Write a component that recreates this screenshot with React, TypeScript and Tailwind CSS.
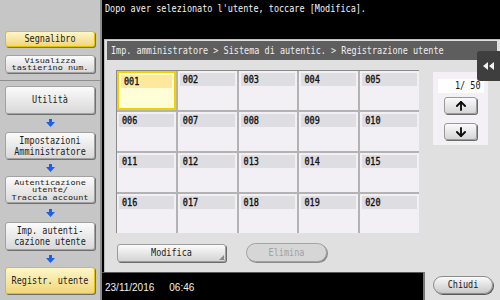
import React from 'react';
import { ArrowUp, ArrowDown } from 'lucide-react';

const mono = "font-['DejaVu_Sans_Mono','Liberation_Mono',monospace] text-[8.5px] leading-[10px]";

interface SideButtonProps {
  label: string;
  height: string;
  yellow?: boolean;
  tiny?: boolean;
}

const SideButton: React.FC<SideButtonProps> = ({ label, height, yellow, tiny }) => {
  const lines = label.split('\n');
  return (
    <div
      className={`${height} w-[90px] rounded-[3px] border flex items-center justify-center text-[#1c1c1c] shadow-[1px_1px_0_#707070] ${
        yellow
          ? 'border-[#e2c000] bg-linear-to-b from-[#fff6c8] to-[#f1d778]'
          : 'border-[#a2a2a2] bg-linear-to-b from-[#fbfbfb] to-[#d9d9d9]'
      }`}
    >
      <div className={`${mono} text-center ${tiny ? 'scale-y-[0.75] leading-[7px]' : 'scale-y-[1.15]'}`}>
        {lines.map((l) => (
          <div key={l}>{l}</div>
        ))}
      </div>
    </div>
  );
};

const BlueArrow = ({ h }: { h: string }) => (
  <div className={`${h} flex items-center justify-center`}>
    <svg width="9" height="8" viewBox="0 0 9 8">
      <path d="M3 0h3v3h3L4.5 8 0 3h3z" fill="#1d5fe6" />
    </svg>
  </div>
);

const Cell = ({ n, selected }: { n: string; selected?: boolean }) => (
  <div
    className={`h-[39px] p-[2px] ${
      selected ? 'bg-[#fffed6] border-2 border-[#f0d200] p-0' : 'bg-[#f2f0f4]'
    }`}
  >
    <div
      className={`h-[13px] pl-[3px] flex items-center ${mono} text-[#111] ${
        selected ? 'bg-[#fde89c]' : 'bg-[#dedde1]'
      }`}
    >
      <span className="scale-y-[1.15] inline-block [-webkit-text-stroke:0.3px_#111]">{n}</span>
    </div>
  </div>
);

const App: React.FC = () => {
  const cells = Array.from({ length: 20 }, (_, i) => String(i + 1).padStart(3, '0'));
  return (
    <div className="relative w-[500px] h-[300px] flex bg-black overflow-hidden">
      {/* sidebar */}
      <div className="w-[102px] h-full bg-[#c6c6c6] border-r-2 border-r-[#8c8c8c] flex flex-col">
        <div className="h-[81px] border-b border-[#8e8e8e] px-[5px] pt-[31px] flex flex-col gap-[8px]">
          <SideButton label="Segnalibro" height="h-[16px]" yellow />
          <SideButton label={'Visualizza\ntastierino num.'} height="h-[18px]" tiny />
        </div>
        <div className="px-[5px] pt-[5px] flex flex-col">
          <SideButton label="Utilità" height="h-[28px]" />
          <BlueArrow h="h-[18px]" />
          <SideButton label={'Impostazioni\nAmministratore'} height="h-[27px]" />
          <BlueArrow h="h-[17px]" />
          <SideButton label={'Autenticazione\nutente/\nTraccia account'} height="h-[27px]" tiny />
          <BlueArrow h="h-[19px]" />
          <SideButton label={'Imp. autenti-\ncazione utente'} height="h-[28px]" />
          <BlueArrow h="h-[17px]" />
          <SideButton label="Registr. utente" height="h-[27px]" yellow />
        </div>
      </div>

      {/* main */}
      <div className="flex-1 flex flex-col">
        <div className={`h-[39px] pl-[3px] pt-[4px] text-[#f4f4f4] ${mono}`}>
          <span className="inline-block scale-y-[1.15]">Dopo aver selezionato l'utente, toccare [Modifica].</span>
        </div>

        <div className="h-[233px] ml-[2px] bg-[#e0e0e0] border-t border-l border-[#bdbdbd] pt-[1px] pl-[2px]">
          <div className={`h-[19px] mr-[3px] bg-[#5e5e5e] text-[#eeeeee] pl-[4px] flex items-center ${mono}`}>
            <span className="inline-block scale-y-[1.15]">
              Imp. amministratore &gt; Sistema di autentic. &gt; Registrazione utente
            </span>
          </div>

          <div className="flex pl-[9px] pt-[10px]">
            <div className="grid grid-cols-5 gap-[2px] bg-[#b3b3b3] w-[303px] border-l border-t border-[#8a8a8a]">
              {cells.map((c, i) => (
                <Cell key={c} n={c} selected={i === 0} />
              ))}
            </div>
            <div className="ml-[14px] mt-[2px] w-[55px] h-[73px] bg-[#f3f1f5] flex flex-col items-center pt-[7px]">
              <div className={`w-[46px] h-[14px] bg-white text-right pr-[3px] flex items-center justify-end ${mono} text-[#111]`}>
                <span className="inline-block scale-y-[1.15]">1/ 50</span>
              </div>
              <div className="mt-[4px] w-[33px] h-[17px] rounded-[3px] border border-[#9a9a9a] bg-linear-to-b from-[#fbfbfb] to-[#d6d6d6] shadow-[1px_1px_0_#6c6c6c] flex items-center justify-center">
                <ArrowUp size={14} strokeWidth={3.2} color="#0a0a0a" />
              </div>
              <div className="mt-[9px] w-[33px] h-[17px] rounded-[3px] border border-[#9a9a9a] bg-linear-to-b from-[#fbfbfb] to-[#d6d6d6] shadow-[1px_1px_0_#6c6c6c] flex items-center justify-center">
                <ArrowDown size={14} strokeWidth={3.2} color="#0a0a0a" />
              </div>
            </div>
          </div>

          <div className="flex items-center pl-[10px] pt-[10px]">
            <div className={`relative w-[109px] h-[18px] rounded-[3px] border border-[#9c9c9c] bg-linear-to-b from-[#fbfbfb] to-[#d4d4d4] shadow-[1px_1px_0_#6c6c6c] flex items-center justify-center ${mono} text-[#1a1a1a]`}>
              <span className="inline-block scale-y-[1.15]">Modifica</span>
              <svg className="absolute right-[1px] bottom-[1px]" width="5" height="5" viewBox="0 0 5 5">
                <path d="M5 0v5H0z" fill="#8a8a8a" />
              </svg>
            </div>
            <div className={`ml-[20px] w-[81px] h-[19px] rounded-full border border-[#a4a4a4] bg-[#d6d6d6] shadow-[1px_1px_0_#8a8a8a] flex items-center justify-center ${mono} text-[#a2a2a2]`}>
              <span className="inline-block scale-y-[1.15]">Elimina</span>
            </div>
          </div>
        </div>

        <div className="flex-1 flex">
          <div className="flex-1 border-t border-[#5a5a5a] pl-[3px] pt-[7px] text-[#f2f2f2] font-['Liberation_Sans_Narrow','Liberation_Sans',sans-serif] text-[10px]">
            <span>23/11/2016</span>
            <span className="ml-[15px]">06:46</span>
          </div>
          <div className="w-[77px] bg-[#e0e0e0] border-l-2 border-[#767676] flex items-start pl-[8px] pt-[4px]">
            <div className={`w-[60px] h-[18px] rounded-full border border-[#8c8c8c] bg-linear-to-b from-[#fafafa] to-[#c9c9c9] shadow-[1px_1px_0_#5a5a5a] flex items-center justify-center ${mono} text-[#1a1a1a]`}>
              <span className="inline-block scale-y-[1.15]">Chiudi</span>
            </div>
          </div>
        </div>
      </div>

      {/* side tab */}
      <div className="absolute right-0 top-[51px] w-[23px] h-[30px] bg-[#3e3e3e] rounded-l-[3px] flex items-center justify-center">
        <svg width="11" height="8" viewBox="0 0 11 8">
          <path d="M0 4l5-4v8zM6 4l5-4v8z" fill="#f2f2f2" />
        </svg>
      </div>
    </div>
  );
};

export default App;
